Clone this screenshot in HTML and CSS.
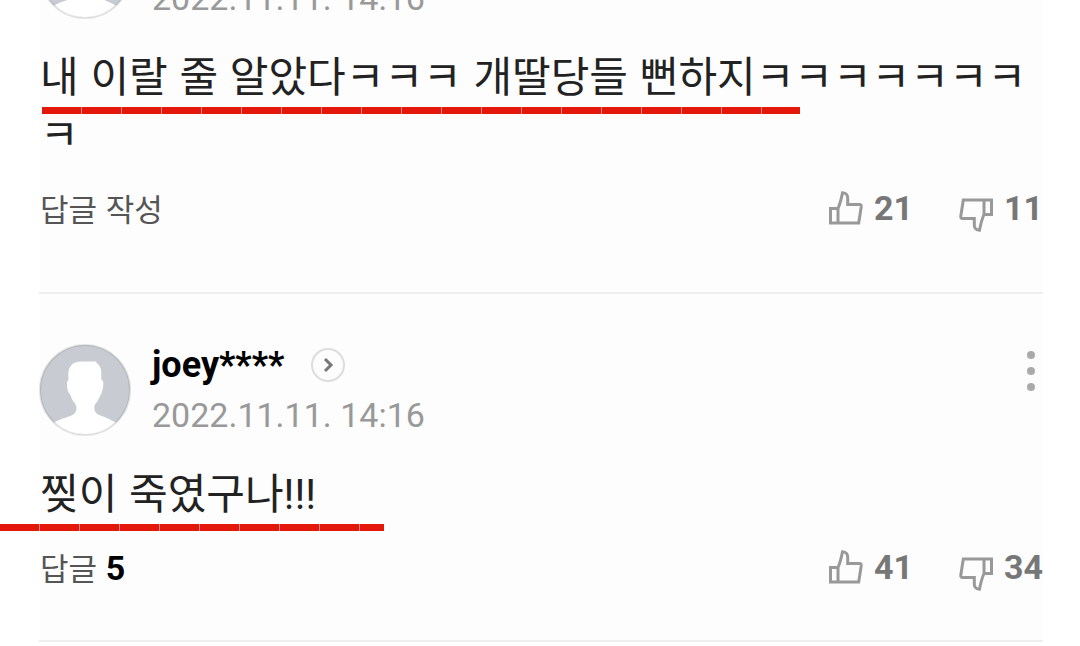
FILE: index.html
```html
<!DOCTYPE html>
<html lang="ko">
<head>
    <meta charset="UTF-8">
    <meta name="viewport" content="width=device-width, initial-scale=1.0">
    <title>댓글</title>
    <link rel="stylesheet" href="styles.css">
</head>
<body>

<!-- 공통 아이콘 -->
<svg class="icon-defs" aria-hidden="true">
    <symbol id="icon-thumb" viewBox="0 0 34 34">
        <path d="M1.500 17.500h7.500v14.500h-7.500zM9 17.500C11.500 12 12.500 7 13.500 1.800C17.500 2 19 4.500 18.700 8V13.500H30.500Q32.500 13.500 32.200 16L29.700 32H9"/>
    </symbol>
    <symbol id="icon-avatar" viewBox="0 0 92 92">
        <circle class="avatar-bg" cx="46" cy="46" r="45"/>
        <path class="avatar-person" d="M15 78.500C23 74 31 73 35 70C39 66 38 61 34 57C32 54 32 51 30.500 49.500C28 48 28 41 28 38C28.500 36.500 29.500 37 29.500 35C28 22 34 17.500 42 17.500H57C57.500 20 60 20 61 23C63 27 62 31 62.500 36C65 37 64.500 40 64 44C63 48 62 51 60 54C59 58 56 59 55.500 62C55 66 56 69 60 71C66 73 70 75 77 78.500C69 87 58 91 46 91C34 91 23 87 15 78.500Z"/>
        <circle class="avatar-ring" cx="46" cy="46" r="45"/>
    </symbol>
</svg>

<main class="comment-list">
    <article class="comment comment-first">
        <header class="comment-header">
            <svg class="avatar"><use href="#icon-avatar"/></svg>
            <div class="user-info">
                <time class="date">2022.11.11. 14:16</time>
            </div>
        </header>
        <p class="comment-text">
            내 이랄 줄 알았다ㅋㅋㅋ 개딸당들 뻔하지ㅋㅋㅋㅋㅋㅋㅋㅋ
            <span class="red-line"></span>
        </p>
        <footer class="comment-footer">
            <button class="reply-btn">답글 작성</button>
            <div class="votes">
                <button class="vote-btn"><svg class="thumb"><use href="#icon-thumb"/></svg>21</button>
                <button class="vote-btn"><svg class="thumb thumb-down"><use href="#icon-thumb"/></svg>11</button>
            </div>
        </footer>
    </article>

    <article class="comment">
        <header class="comment-header">
            <svg class="avatar"><use href="#icon-avatar"/></svg>
            <div class="user-info">
                <div class="user-row">
                    <a href="#" class="user-name">joey****</a>
                    <button class="user-more" aria-label="프로필 보기">
                        <svg viewBox="0 0 34 34"><circle cx="17" cy="17" r="16"/><path d="M14 11L20 17L14 23"/></svg>
                    </button>
                </div>
                <time class="date">2022.11.11. 14:16</time>
            </div>
            <button class="menu-btn" aria-label="메뉴">
                <svg viewBox="0 0 8 40"><circle cx="4" cy="4" r="4"/><circle cx="4" cy="20" r="4"/><circle cx="4" cy="36" r="4"/></svg>
            </button>
        </header>
        <p class="comment-text">
            찢이 죽였구나<span class="mark">!!!</span>
            <span class="red-line red-line-short"></span>
        </p>
        <footer class="comment-footer">
            <button class="reply-btn">답글 <strong>5</strong></button>
            <div class="votes">
                <button class="vote-btn"><svg class="thumb"><use href="#icon-thumb"/></svg>41</button>
                <button class="vote-btn"><svg class="thumb thumb-down"><use href="#icon-thumb"/></svg>34</button>
            </div>
        </footer>
    </article>
</main>

</body>
</html>
```

FILE: styles.css
```css
* {
    box-sizing: border-box;
}

body {
    margin: 0;
    background: #fff;
    color: #222;
    font-family: Roboto, "Noto Sans CJK KR", sans-serif;
    overflow: hidden;
}

button {
    padding: 0;
    border: none;
    background: none;
    font-family: inherit;
    cursor: pointer;
}

.icon-defs {
    display: none;
}

/* 위쪽이 스크롤되어 올라간 상태 */
.comment-list {
    margin: -123px 37px 0 39px;
    background: #fdfdfd;
}

.comment {
    padding: 50px 0 53px;
    border-bottom: 2px solid #eee;
}

.comment-first {
    padding-bottom: 64px;
}

.comment-header {
    display: flex;
    height: 92px;
}

.avatar {
    width: 92px;
    height: 92px;
    margin-right: 21px;
}

.avatar-bg {
    fill: #c8cbd1;
}

.avatar-person {
    fill: #fff;
}

.avatar-ring {
    fill: none;
    stroke: #000;
    stroke-opacity: 0.1;
    stroke-width: 2;
}

.user-info {
    flex: 1;
    display: flex;
    flex-direction: column;
    justify-content: flex-end;
    padding-bottom: 1px;
}

.user-row {
    display: flex;
    align-items: center;
    height: 42px;
    margin-bottom: 9px;
}

.user-name {
    color: #000;
    font-size: 36px;
    font-weight: 700;
    line-height: 42px;
    text-decoration: none;
}

.user-more {
    width: 34px;
    height: 34px;
    margin-left: 27px;
}

.user-more svg {
    display: block;
    fill: none;
    stroke: #ddd;
    stroke-width: 2;
}

.user-more path {
    stroke: #777;
    stroke-width: 3;
}

.date {
    color: #999;
    font-size: 34px;
    line-height: 40px;
}

.menu-btn {
    width: 8px;
    height: 40px;
    margin: 7px 8px 0 0;
}

.menu-btn svg {
    display: block;
    fill: #aaa;
}

.comment-text {
    position: relative;
    margin: 26px 0 27px;
    padding-left: 1px;
    font-family: "Noto Sans CJK KR", sans-serif;
    font-size: 42px;
    line-height: 58px;
    word-break: break-all;
}

.mark {
    font-family: Roboto, sans-serif;
    line-height: 1;
}

/* 빨간 밑줄 표시 */
.red-line {
    position: absolute;
    top: 62px;
    left: 3px;
    width: 758px;
    height: 7px;
    background: repeating-linear-gradient(to right, #e3180b 0, #e3180b 39px, #f28a80 39px, #f28a80 40px);
}

.red-line-short {
    left: -39px;
    width: 384px;
}

.comment-footer {
    display: flex;
    justify-content: space-between;
    align-items: center;
    height: 40px;
    padding-left: 1px;
}

.reply-btn {
    color: #555;
    font-family: "Noto Sans CJK KR", sans-serif;
    font-size: 31px;
    line-height: 40px;
}

.reply-btn strong {
    color: #000;
    font-family: Roboto, sans-serif;
    font-size: 34px;
}

.votes {
    display: flex;
    gap: 46px;
}

.vote-btn {
    display: flex;
    align-items: center;
    gap: 11px;
    color: #777;
    font-size: 34px;
    font-weight: 700;
    line-height: 40px;
}

.thumb {
    width: 34px;
    height: 34px;
    fill: none;
    stroke: #999;
    stroke-width: 3;
}

.thumb-down {
    margin-top: 14px;
    transform: rotate(180deg);
}
```
